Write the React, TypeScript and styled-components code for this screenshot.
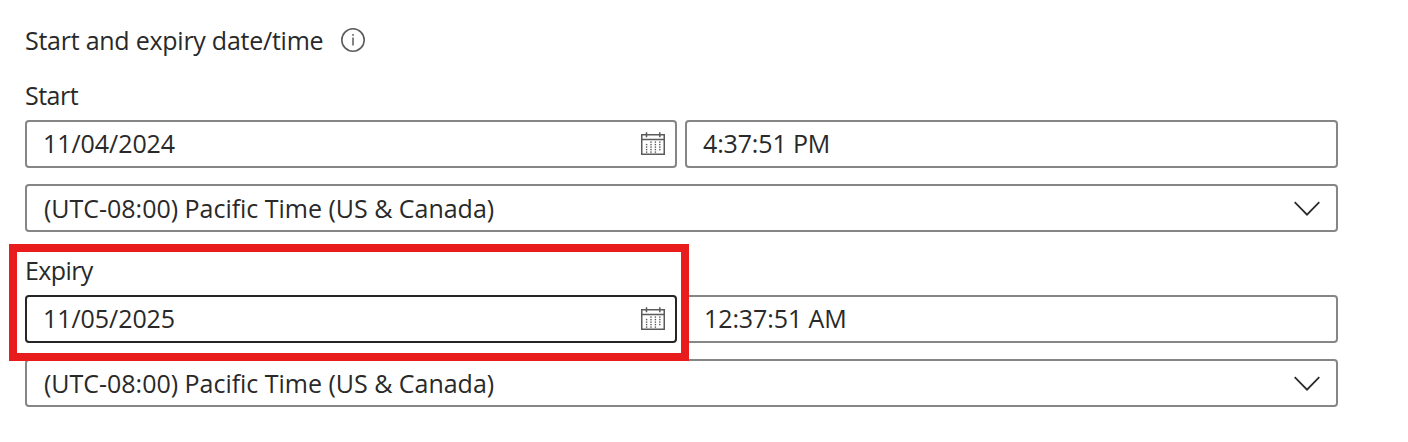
import React from "react";
import styled, { createGlobalStyle } from "styled-components";

const GlobalStyle = createGlobalStyle`
  * { box-sizing: border-box; }
  body { margin: 0; background: #fff; overflow: hidden; }
`;

const Page = styled.main`
  width: 1408px;
  height: 442px;
  padding: 23px 70px 0 25px;
  background: #fff;
  color: #292929;
  font-family: "Segoe UI", "Open Sans", "Noto Sans", sans-serif;
  font-size: 25px;
  line-height: 34px;
`;

const Heading = styled.div`
  display: flex;
  height: 34px;
  gap: 17px;
`;

const Text = styled.span<{ $spacing?: number }>`
  white-space: nowrap;
  letter-spacing: ${(p) => p.$spacing ?? 0}px;
`;

const Group = styled.section<{ $top: number }>`
  position: relative;
  margin-top: ${(p) => p.$top}px;
`;

const Label = styled.div`
  height: 34px;
  margin-bottom: 8px;
`;

const Row = styled.div`
  display: grid;
  grid-template-columns: 652px 653px;
  gap: 8px;
  margin-bottom: 16px;
`;

const Field = styled.div<{ $active?: boolean; $left?: number }>`
  display: flex;
  align-items: flex-start;
  justify-content: space-between;
  height: 48px;
  padding: 4px 10px 0 ${(p) => p.$left ?? 16}px;
  border: 2px solid ${(p) => (p.$active ? "#252525" : "#868686")};
  border-radius: 4px;
  background: #fff;
`;

const Select = styled(Field)`
  padding: 5px 16px 0 17px;
`;

const Highlight = styled.div`
  position: absolute;
  left: -16px;
  top: -9px;
  width: 680px;
  height: 117px;
  border: 8px solid #e81c1c;
  pointer-events: none;
`;

const InfoSvg = styled.svg`
  margin-top: 4px;
`;

const InfoIcon = () => (
  <InfoSvg width="26" height="26" viewBox="0 0 26 26" fill="none" stroke="#5c5c5c">
    <circle cx="13" cy="13" r="11.2" strokeWidth="1.6" />
    <path d="M13 10.5v8M13 7v1.8" strokeWidth="1.5" />
  </InfoSvg>
);

const CalendarSvg = styled.svg`
  margin-top: 6px;
`;

const DOTS = [
  [1, 2, 3, 4],
  [0, 1, 2, 3, 4],
  [0, 1, 2, 3, 4],
  [0, 1, 2, 3],
];

const CalendarIcon = () => (
  <CalendarSvg width="24" height="24" viewBox="0 0 24 24" fill="none" stroke="#5a5a5a">
    <path d="M.75 2.8h22.5v19.4H.75zM.75 7.4h22.5M5.5.3v5M18.8.3v5" strokeWidth="1.5" />
    {DOTS.map((rows, c) =>
      rows.map((r) => (
        <rect key={`${c}-${r}`} x={4.9 + c * 4.4} y={9.4 + r * 2.5} width="1.4" height="1.4" fill="#5a5a5a" stroke="none" />
      ))
    )}
  </CalendarSvg>
);

const ChevronSvg = styled.svg`
  margin-top: 10px;
`;

const Chevron = () => (
  <ChevronSvg width="26" height="16" viewBox="0 0 26 16" fill="none" stroke="#2b2b2b">
    <path d="M.7 1.2 13 13.6 25.3 1.2" strokeWidth="1.8" />
  </ChevronSvg>
);

interface DateTimeProps {
  label: string;
  date: string;
  time: string;
  top: number;
  labelSpacing: number;
  timeSpacing: number;
  timeLeft: number;
  active?: boolean;
}

const DateTimeGroup = ({ label, date, time, top, labelSpacing, timeSpacing, timeLeft, active }: DateTimeProps) => (
  <Group $top={top}>
    <Label><Text $spacing={labelSpacing}>{label}</Text></Label>
    <Row>
      <Field $active={active}>
        <Text $spacing={-0.06}>{date}</Text>
        <CalendarIcon />
      </Field>
      <Field $left={timeLeft}>
        <Text $spacing={timeSpacing}>{time}</Text>
      </Field>
    </Row>
    <Select>
      <Text $spacing={-0.02}>(UTC-08:00) Pacific Time (US &amp; Canada)</Text>
      <Chevron />
    </Select>
    {active && <Highlight />}
  </Group>
);

export default function App() {
  return (
    <Page>
      <GlobalStyle />
      <Heading>
        <Text $spacing={-0.25}>Start and expiry date/time</Text>
        <InfoIcon />
      </Heading>
      <DateTimeGroup label="Start" date="11/04/2024" time="4:37:51 PM" top={21} labelSpacing={-0.5} timeSpacing={-0.15} timeLeft={16} />
      <DateTimeGroup label="Expiry" date="11/05/2025" time="12:37:51 AM" top={21} labelSpacing={-0.6} timeSpacing={-0.1} timeLeft={17} active />
    </Page>
  );
}
